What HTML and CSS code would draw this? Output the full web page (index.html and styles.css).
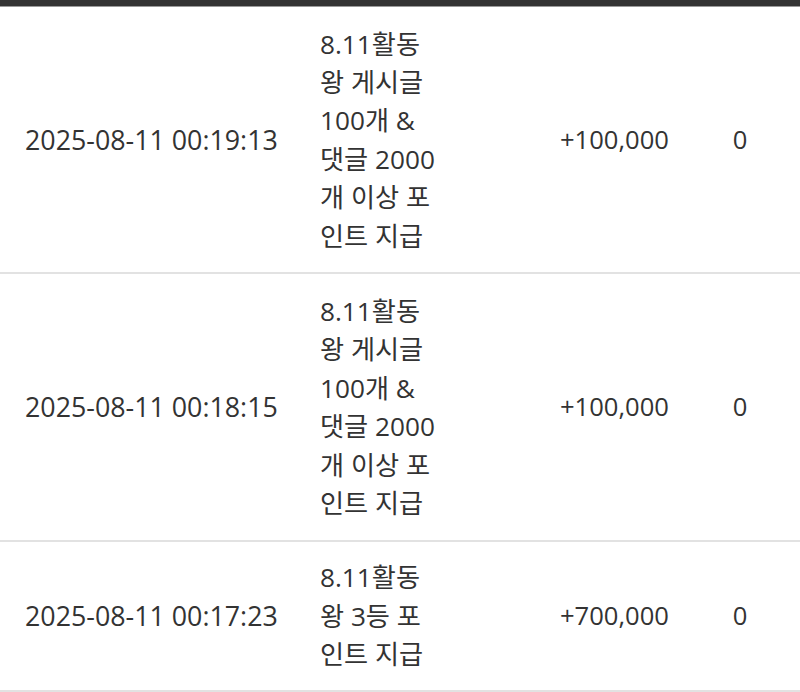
FILE: index.html
```html
<!DOCTYPE html>
<html lang="ko">
<head>
<meta charset="utf-8">
<link rel="stylesheet" href="styles.css">
</head>
<body>
<div class="topbar"></div>
<table class="points">
  <colgroup>
    <col class="c-date"><col class="c-desc"><col class="c-amt"><col class="c-bal">
  </colgroup>
  <tbody>
    <tr>
      <td class="date">2025-08-11 00:19:13</td>
      <td class="desc"><div class="desc-text">8.11활동왕 게시글 100개 &amp; 댓글 2000개 이상 포인트 지급</div></td>
      <td class="amt">+100,000</td>
      <td class="bal">0</td>
    </tr>
    <tr>
      <td class="date">2025-08-11 00:18:15</td>
      <td class="desc"><div class="desc-text">8.11활동왕 게시글 100개 &amp; 댓글 2000개 이상 포인트 지급</div></td>
      <td class="amt">+100,000</td>
      <td class="bal">0</td>
    </tr>
    <tr class="short">
      <td class="date">2025-08-11 00:17:23</td>
      <td class="desc"><div class="desc-text">8.11활동왕 3등 포인트 지급</div></td>
      <td class="amt">+700,000</td>
      <td class="bal">0</td>
    </tr>
  </tbody>
</table>
</body>
</html>
```
FILE: styles.css
```css
html, body {
  margin: 0;
  padding: 0;
  background: #ffffff;
}
body {
  font-family: "Open Sans", "Noto Sans CJK KR", sans-serif;
  font-size: 25.6px;
  line-height: 38.4px;
  color: #333333;
  overflow: hidden;
}
.topbar {
  height: 6px;
  background: #333333;
  border-bottom: 1px solid #9a9a9a;
}
.points {
  width: 800px;
  border-collapse: collapse;
  table-layout: fixed;
}
.c-date { width: 295px; }
.c-desc { width: 150px; }
.c-amt { width: 255px; }
.c-bal { width: 100px; }
.points td {
  padding: 17.5px 0;
  vertical-align: middle;
  border-bottom: 2px solid #e2e2e2;
  white-space: nowrap;
}
.points tr.short td {
  padding-top: 16.5px;
  padding-bottom: 16.5px;
}
.points td.date {
  padding-left: 25px;
  font-size: 26.8px;
}
.points td.desc {
  padding-left: 25px;
  white-space: normal;
  font-size: 26.2px;
}
.desc-text {
  width: 119px;
}
.points td.amt {
  text-align: right;
  padding-right: 31px;
}
.points td.bal {
  text-align: center;
  padding-right: 20px;
}
```
